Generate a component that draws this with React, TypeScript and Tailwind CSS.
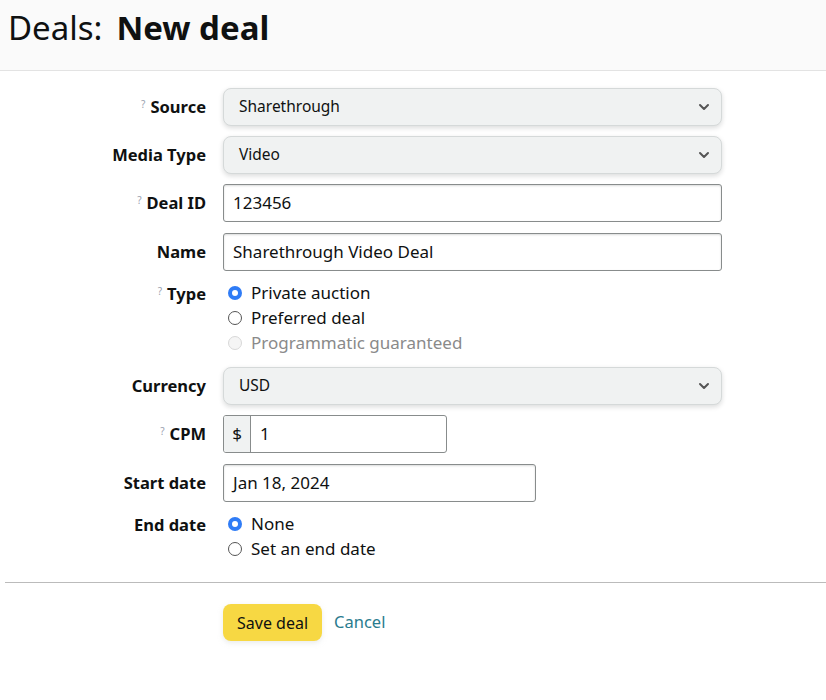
import React from 'react';
import { ChevronDown } from 'lucide-react';

const Label = ({ text, hint, top }: { text: string; hint?: boolean; top?: boolean }) => (
  <div className={`flex justify-end font-bold text-[16.5px] text-[#0f1111] ${top ? 'items-start pt-[2px]' : 'items-center'}`}>
    <span>
      {hint && <sup className="text-[10px] font-normal text-gray-400 mr-[5px]">?</sup>}
      {text}
    </span>
  </div>
);

const Select = ({ value }: { value: string }) => (
  <div className="h-[38px] w-[499px] flex items-center justify-between pl-[15px] pr-[9px] bg-[#f0f2f2] border border-[#d5d9d9] rounded-[8px] shadow-[0_2px_5px_rgba(15,17,17,0.15)] text-[15.5px] text-[#0f1111]">
    <span>{value}</span>
    <ChevronDown className="w-[16px] h-[16px] text-[#555]" strokeWidth={3} />
  </div>
);

const Input = ({ value, width }: { value: string; width: string }) => (
  <div className={`h-[38px] ${width} flex items-center px-[9px] border border-[#888c8c] rounded-[3px] bg-white shadow-[inset_0_1px_2px_rgba(15,17,17,0.15)] text-[17px] text-[#0f1111]`}>
    {value}
  </div>
);

const Radio = ({ label, checked, disabled }: { label: string; checked?: boolean; disabled?: boolean }) => (
  <div className="h-[25px] flex items-center gap-[9px] pl-[5px]">
    {checked ? (
      <span className="w-[14px] h-[14px] rounded-full bg-[#2f7cf6] flex items-center justify-center">
        <span className="w-[6px] h-[6px] rounded-full bg-white" />
      </span>
    ) : (
      <span className={`w-[14px] h-[14px] rounded-full border ${disabled ? 'border-[#d8d8d8] bg-[#f5f5f5]' : 'border-[#555] bg-white'}`} />
    )}
    <span className={`text-[17px] ${disabled ? 'text-[#8a8a8a]' : 'text-[#0f1111]'}`}>{label}</span>
  </div>
);

export default function App() {
  return (
    <div className="min-h-[700px] bg-white" style={{ fontFamily: '"Noto Sans", sans-serif' }}>
      <div className="h-[71px] bg-[#fafafa] border-b border-[#e3e3e3] flex items-center pl-[8px] pb-[16px]">
        <h1 className="text-[33px] text-[#0f1111] leading-none">
          Deals:<span className="font-bold ml-[14px]">New deal</span>
        </h1>
      </div>

      <div className="grid grid-cols-[206px_auto] gap-x-[17px] pt-[17px] justify-start">
        <Label text="Source" hint />
        <Select value="Sharethrough" />

        <div className="h-[10px] col-span-2" />
        <Label text="Media Type" />
        <Select value="Video" />

        <div className="h-[10px] col-span-2" />
        <Label text="Deal ID" hint />
        <Input value="123456" width="w-[499px]" />

        <div className="h-[11px] col-span-2" />
        <Label text="Name" />
        <Input value="Sharethrough Video Deal" width="w-[499px]" />

        <div className="h-[9px] col-span-2" />
        <Label text="Type" hint top />
        <div className="flex flex-col">
          <Radio label="Private auction" checked />
          <Radio label="Preferred deal" />
          <Radio label="Programmatic guaranteed" disabled />
        </div>

        <div className="h-[12px] col-span-2" />
        <Label text="Currency" />
        <Select value="USD" />

        <div className="h-[10px] col-span-2" />
        <Label text="CPM" hint />
        <div className="h-[38px] w-[224px] flex border border-[#888c8c] rounded-[3px] bg-white text-[17px] text-[#0f1111] overflow-hidden">
          <span className="w-[27px] flex items-center justify-center bg-[#f0f2f2] border-r border-[#888c8c]">$</span>
          <span className="flex items-center px-[9px]">1</span>
        </div>

        <div className="h-[11px] col-span-2" />
        <Label text="Start date" />
        <Input value="Jan 18, 2024" width="w-[313px]" />

        <div className="h-[9px] col-span-2" />
        <Label text="End date" top />
        <div className="flex flex-col">
          <Radio label="None" checked />
          <Radio label="Set an end date" />
        </div>
      </div>

      <div className="ml-[5px] mt-[21px] border-t border-[#bbbbbb]" />

      <div className="flex items-center gap-[12px] pl-[223px] pt-[21px]">
        <button className="h-[37px] px-[14px] rounded-[8px] bg-[#f7d843] shadow-[0_2px_5px_rgba(213,217,217,0.5)] text-[16px] text-[#0f1111]">
          Save deal
        </button>
        <a className="text-[16.5px] text-[#2a7b8e]">Cancel</a>
      </div>
    </div>
  );
}
